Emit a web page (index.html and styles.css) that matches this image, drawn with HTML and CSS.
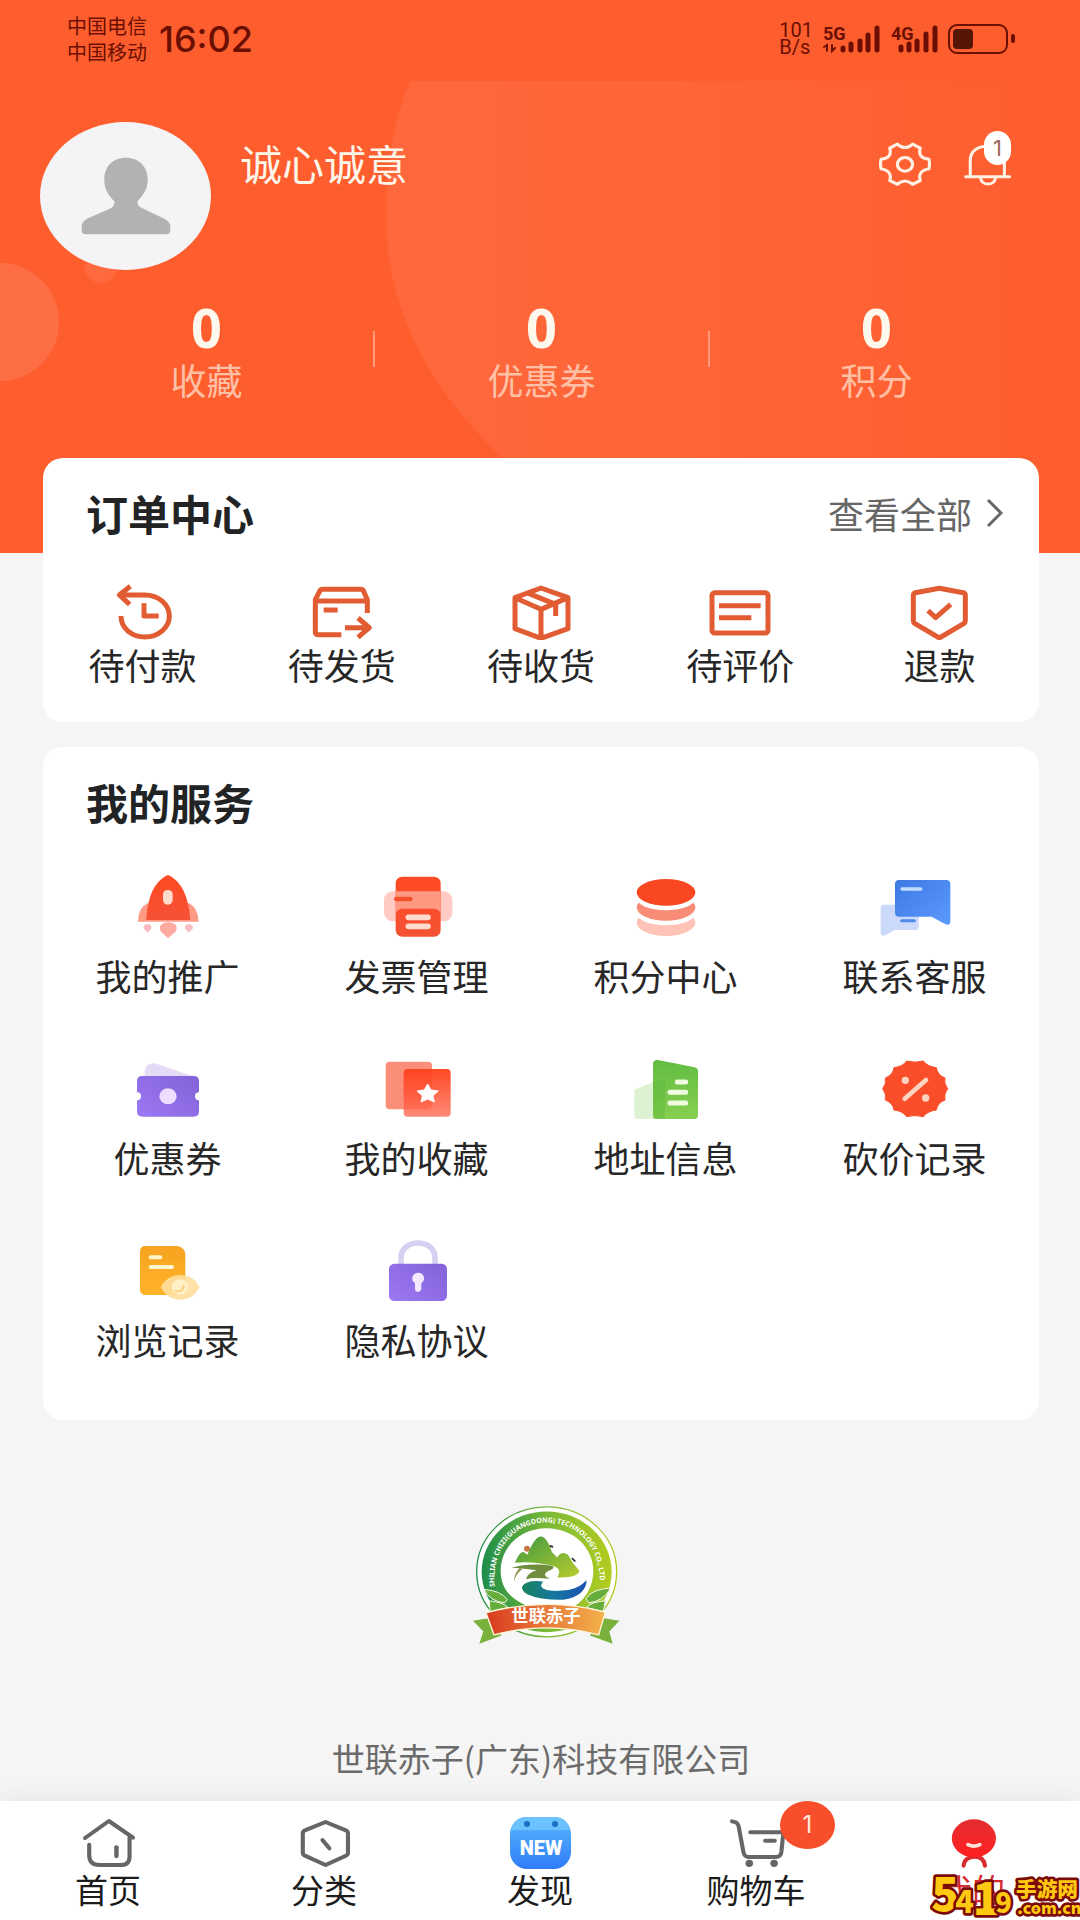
FILE: index.html
```html
<!DOCTYPE html>
<html lang="zh-CN">
<head>
<meta charset="utf-8">
<meta name="viewport" content="width=device-width, initial-scale=1">
<title>我的</title>
<link rel="stylesheet" href="styles.css">
</head>
<body>
<div class="app">
  <header class="hero">
    <svg class="hero-art" width="1080" height="472" viewBox="0 81 1080 472" aria-hidden="true">
      <defs>
        <linearGradient id="glow" x1="0" x2="1" y1="0" y2="0">
          <stop offset="0" stop-color="#fff" stop-opacity=".07"/>
          <stop offset=".4" stop-color="#fff" stop-opacity=".05"/>
          <stop offset="1" stop-color="#fff" stop-opacity="0"/>
        </linearGradient>
      </defs>
      <path d="M410 81Q386 140 386 215Q386 350 505 460L560 553H1080V81Z" fill="url(#glow)"/>
      <circle cx="0" cy="322" r="59" fill="#fff" fill-opacity=".11"/>
      <circle cx="101" cy="267" r="16" fill="#fff" fill-opacity=".08"/>
    </svg>

    <div class="status">
      <div class="carriers"><span>中国电信</span><span>中国移动</span></div>
      <time class="clock">16:02</time>
      <div class="speed"><span>101</span><span>B/s</span></div>
      <svg class="signal" width="58" height="30" viewBox="0 -1 58 30" role="img" aria-label="5G">
        <text class="signal-text" x="0" y="15">5G</text>
        <path d="M4 26V20L1 22M9 20V26L12 23" stroke-width="2"/>
        <path d="M20 23v2M28 19v6M37 16v9M45 10v15M54 3v22" stroke-width="5"/>
      </svg>
      <svg class="signal" width="47" height="30" viewBox="0 -1 47 30" role="img" aria-label="4G">
        <text class="signal-text" x="0" y="15">4G</text>
        <path d="M10 22v3M18 19v6M26 16v9M35 9v16M44 3v22" stroke-width="5"/>
      </svg>
      <svg class="battery" width="67" height="30" viewBox="0 0 67 30" aria-hidden="true">
        <rect x="1" y="1" width="58" height="28" rx="8" fill="none" stroke="#6b0f02" stroke-width="2"/>
        <rect x="5" y="5" width="20" height="20" rx="4" fill="#551605"/>
        <rect x="63" y="10" width="4" height="9" rx="2" fill="#6b0f02"/>
      </svg>
    </div>

    <div class="profile">
      <svg class="avatar" viewBox="113 363 500 448" preserveAspectRatio="none" role="img" aria-label="头像">
        <ellipse cx="363" cy="587" rx="250" ry="224" fill="#f4f4f7"/>
        <path d="M364 471C402 471 428 498 428 537C428 570 412 586 398 603Q398 616 408 622L475 655Q494 665 494 678V692Q494 702 482 703H247Q235 702 235 692V678Q235 665 252 655L320 624Q331 618 331 604C315 586 301 570 301 537C301 498 326 471 364 471Z" fill="#b2b2b2"/>
      </svg>
      <h1 class="name">诚心诚意</h1>
      <div class="actions">
        <button class="icon-btn" type="button" aria-label="设置">
          <svg width="52" height="44" viewBox="985 428 150 128" preserveAspectRatio="none">
            <path d="M1038 434Q1060 454 1082 434L1104 446C1098 466 1108 476 1129 478Q1132 492 1129 506C1108 510 1098 520 1104 540L1082 551Q1060 532 1038 551L1016 540C1022 520 1012 510 991 506Q988 492 991 478C1012 476 1022 466 1016 446Z"/>
            <ellipse cx="1060" cy="493" rx="22" ry="20"/>
          </svg>
        </button>
        <button class="icon-btn" type="button" aria-label="消息">
          <svg width="47" height="44" viewBox="1233 428 135 132" preserveAspectRatio="none">
            <path d="M1238 532H1364M1251 530V483C1251 455 1272 441 1300 441S1349 455 1349 483V530M1281 537C1284 560 1320 560 1323 537"/>
          </svg>
          <span class="bell-count">1</span>
        </button>
      </div>
    </div>

    <div class="stats">
      <a class="stat" href="#fav"><b>0</b><span>收藏</span></a>
      <i class="divider"></i>
      <a class="stat" href="#coupon"><b>0</b><span>优惠券</span></a>
      <i class="divider"></i>
      <a class="stat" href="#points"><b>0</b><span>积分</span></a>
    </div>
  </header>

  <main class="content">
    <section class="card orders">
      <div class="card-head">
        <h2>订单中心</h2>
        <a class="more" href="#orders">查看全部
          <svg width="17" height="30" viewBox="0 0 17 30" aria-hidden="true"><path d="M2 2L15 15L2 28" fill="none" stroke="#666" stroke-width="3"/></svg>
        </a>
      </div>
      <nav class="order-grid">
        <a class="order" href="#pay">
          <svg viewBox="213 72 186 168"><path d="M268 79L235 105L266 133M235 105H312C352 105 385 133 385 168S352 231 312 231S240 205 240 168M309 130V168H353"/></svg>
          <span>待付款</span>
        </a>
        <a class="order" href="#ship">
          <svg viewBox="811 72 186 168"><path d="M902 224H832Q824 224 824 216V119L838 92Q840 88 846 88H960Q966 88 968 92L980 119V159M824 123H980M849 150H891M913 203H984M952 174L986 203L952 232"/></svg>
          <span>待发货</span>
        </a>
        <a class="order" href="#receive">
          <svg viewBox="-90 72 186 168"><path d="M3 84L84 113V206L3 235L-75 206V113ZM-75 113L3 148L84 113M3 148V235M-40 98L47 133V168"/></svg>
          <span>待收货</span>
        </a>
        <a class="order" href="#review">
          <svg viewBox="510 72 186 168"><rect x="519" y="98" width="168" height="121" rx="8"/><path d="M540 137H665M540 173H637"/></svg>
          <span>待评价</span>
        </a>
        <a class="order" href="#refund">
          <svg viewBox="1107 72 186 168"><path d="M1201 85L1273 98Q1279 100 1279 106V182Q1279 188 1274 191L1201 234L1128 191Q1123 188 1123 182V106Q1123 100 1129 98ZM1167 152L1190 173L1235 133"/></svg>
          <span>退款</span>
        </a>
      </nav>
    </section>

    <section class="card services">
      <div class="card-head"><h2>我的服务</h2></div>
      <nav class="service-grid">
        <a class="service" href="#promo">
          <svg viewBox="153 75 216 192">
            <defs>
              <linearGradient id="red" x1="0" x2="0" y1="0" y2="1"><stop offset="0" stop-color="#ff4a24"/><stop offset="1" stop-color="#f45235"/></linearGradient>
              <linearGradient id="violet" x1="0" x2="1" y1="1" y2="0"><stop offset="0" stop-color="#9c78f4"/><stop offset="1" stop-color="#8362d8"/></linearGradient>
              <linearGradient id="blue" x1="0" x2="1" y1="0" y2="1"><stop offset="0" stop-color="#3d79e2"/><stop offset="1" stop-color="#5b9aff"/></linearGradient>
              <linearGradient id="green" x1="0" x2="0" y1="0" y2="1"><stop offset="0" stop-color="#62bd43"/><stop offset="1" stop-color="#88cf50"/></linearGradient>
              <linearGradient id="amber" x1="0" x2="0" y1="0" y2="1"><stop offset="0" stop-color="#f7a321"/><stop offset="1" stop-color="#ffb328"/></linearGradient>
              <linearGradient id="coral" x1="0" x2="0" y1="0" y2="1"><stop offset="0" stop-color="#ff4a24"/><stop offset="1" stop-color="#ff8a78"/></linearGradient>
            </defs>
            <path d="M200 160Q172 172 171 215H353Q350 172 324 160Z" fill="#ff9a84"/>
            <path d="M261 75C226 90 200 130 196 210H328C322 130 296 90 261 75Z" fill="url(#red)"/>
            <rect x="246" y="120" width="29" height="44" rx="14" fill="#ffdccb"/>
            <path d="M261 265L240 245Q232 232 242 222Q261 212 282 222Q292 234 283 246Z" fill="#ffaaa0"/>
            <path d="M200 248L188 236Q185 224 200 222Q214 224 211 236ZM323 248L312 236Q309 224 323 222Q338 224 335 236Z" fill="#f8bcc2"/>
          </svg>
          <span>我的推广</span>
        </a>
        <a class="service" href="#invoice">
          <svg viewBox="900 75 216 192">
            <rect x="909" y="124" width="205" height="90" rx="26" fill="#ffcbc4"/>
            <rect x="944" y="80" width="135" height="180" rx="20" fill="url(#red)"/>
            <path d="M944 124H1079V188Q1070 176 1059 176H964Q952 176 944 188Z" fill="#ff9880"/>
            <path d="M946 147H988" stroke="#f4502b" stroke-width="14" stroke-linecap="round"/>
            <path d="M982 202H1041M982 229H1041" stroke="#ffdccb" stroke-width="17" stroke-linecap="round"/>
          </svg>
          <span>发票管理</span>
        </a>
        <a class="service" href="#credits">
          <svg viewBox="210 75 216 192">
            <ellipse cx="318" cy="218" rx="88" ry="40" fill="#ffc3b7"/>
            <ellipse cx="318" cy="183" rx="93" ry="43" fill="#fff"/>
            <ellipse cx="318" cy="172" rx="88" ry="40" fill="#f98c76"/>
            <ellipse cx="318" cy="138" rx="93" ry="43" fill="#fff"/>
            <ellipse cx="318" cy="127" rx="88" ry="40" fill="#f94722"/>
          </svg>
          <span>积分中心</span>
        </a>
        <a class="service" href="#support">
          <svg viewBox="957 75 216 192">
            <path d="M971 164H1066Q1076 164 1076 174V230Q1076 240 1066 240H1003L973 257Q962 260 962 247V174Q962 164 971 164Z" fill="#cbd9fb"/>
            <path d="M1017 90H1159Q1171 90 1171 102V215Q1169 229 1155 222L1115 200H1017Q1005 200 1005 188V102Q1005 90 1017 90Z" fill="url(#blue)"/>
            <path d="M1026 117H1082" stroke="#c0ddff" stroke-width="10" stroke-linecap="round"/>
            <path d="M1025 212H1063" stroke="#518bea" stroke-width="9" stroke-linecap="round"/>
          </svg>
          <span>联系客服</span>
        </a>
        <a class="service" href="#coupons">
          <svg viewBox="153 621 216 192">
            <path d="M191 690V662Q195 638 222 640L340 680V700Z" fill="#e5daf6"/>
            <path d="M184 678H338Q354 678 354 694V727A12 12 0 0 0 354 751V784Q354 800 338 800H184Q168 800 168 784V751A12 12 0 0 0 168 727V694Q168 678 184 678Z" fill="url(#violet)"/>
            <ellipse cx="261" cy="739" rx="26" ry="24" fill="#efdcff"/>
          </svg>
          <span>优惠券</span>
        </a>
        <a class="service" href="#favorites">
          <svg viewBox="900 621 216 192">
            <rect x="914" y="635" width="139" height="143" rx="12" fill="#fb8e78"/>
            <rect x="968" y="657" width="141" height="143" rx="12" fill="url(#coral)"/>
            <path d="M968 669Q968 657 980 657H1053V766Q1053 778 1041 778H968Z" fill="#ff3514" fill-opacity=".25"/>
            <path d="M1040 702L1050 720L1072 723L1056 737L1060 756L1040 747L1020 756L1024 737L1008 723L1030 720Z" fill="#fff" stroke="#fff" stroke-width="3" stroke-linejoin="round"/>
          </svg>
          <span>我的收藏</span>
        </a>
        <a class="service" href="#address">
          <svg viewBox="210 621 216 192">
            <path d="M223 719L279 696H315V807H233Q223 807 223 797Z" fill="#ddf2d3"/>
            <path d="M294 630L404 652Q414 655 414 664V796Q414 807 403 807H290Q279 807 279 796V640Q281 628 294 630Z" fill="url(#green)"/>
            <path d="M279 696L315 690V807H290Q279 807 279 796Z" fill="#58b63d" fill-opacity=".4"/>
            <path d="M352 696H377M330 727H377M330 759H377" stroke="#effce0" stroke-width="15" stroke-linecap="round"/>
          </svg>
          <span>地址信息</span>
        </a>
        <a class="service" href="#bargain">
          <svg viewBox="957 621 216 192">
            <path d="M1040 633Q1065 640 1090 633Q1103 650 1129 653Q1132 675 1155 684Q1151 701 1163 716Q1151 731 1155 750Q1132 759 1129 780Q1103 783 1090 800Q1065 793 1040 800Q1028 783 1002 780Q999 759 976 750Q980 731 968 716Q980 701 976 684Q999 675 1002 653Q1028 650 1040 633Z" fill="#fa4e2a" stroke="#fa4e2a" stroke-width="3" stroke-linejoin="round"/>
            <path d="M1034 746L1098 690" stroke="#ffd3c2" stroke-width="14" stroke-linecap="round"/>
            <circle cx="1036" cy="691" r="11" fill="#ffd3c2"/><circle cx="1097" cy="744" r="11" fill="#ffd3c2"/>
          </svg>
          <span>砍价记录</span>
        </a>
        <a class="service" href="#history">
          <svg viewBox="153 297 216 192">
            <path d="M194 318H288Q313 322 313 345V447Q313 465 295 465H194Q177 465 177 447V335Q177 318 194 318Z" fill="url(#amber)"/>
            <path d="M209 352H238M209 381H273" stroke="#fff6ce" stroke-width="12" stroke-linecap="round"/>
            <path d="M239 441Q258 405 298 405T356 441Q337 479 298 479T239 441Z" fill="#ffdf9f" fill-opacity=".9"/>
            <ellipse cx="297" cy="441" rx="25" ry="23" fill="#fff0c8"/>
            <path d="M284 452Q304 459 308 438" fill="none" stroke="#fbd48a" stroke-width="7" stroke-linecap="round"/>
          </svg>
          <span>浏览记录</span>
        </a>
        <a class="service" href="#privacy">
          <svg viewBox="900 297 216 192">
            <path d="M960 376V354C960 326 983 309 1011 309S1062 326 1062 354V376" fill="none" stroke="#d8d0f3" stroke-width="17"/>
            <rect x="924" y="371" width="174" height="112" rx="16" fill="url(#violet)"/>
            <path d="M1011 398A19 17 0 0 1 1021 429V448Q1019 456 1011 456T1002 448V429A19 17 0 0 1 1011 398Z" fill="#f3e8ff"/>
          </svg>
          <span>隐私协议</span>
        </a>
      </nav>
    </section>
  </main>

  <footer class="company">
    <svg class="logo" viewBox="60 70 486 425" role="img" aria-label="世联赤子">
      <defs>
        <linearGradient id="ring" x1="0" x2="1" y1="0" y2="0"><stop offset="0" stop-color="#1d8d4b"/><stop offset=".5" stop-color="#7bb936"/><stop offset="1" stop-color="#b3cc20"/></linearGradient>
        <linearGradient id="ribbon" x1="0" x2="1" y1="0" y2="0"><stop offset="0" stop-color="#d83a1d"/><stop offset=".5" stop-color="#e8793a"/><stop offset="1" stop-color="#f2b24a"/></linearGradient>
        <linearGradient id="hill" x1="0" x2="1" y1="0" y2="1"><stop offset="0" stop-color="#3f9a42"/><stop offset="1" stop-color="#b8cb2d"/></linearGradient>
        <linearGradient id="river" x1="0" x2="1" y1="0" y2="0"><stop offset="0" stop-color="#18835c"/><stop offset=".5" stop-color="#1677a1"/><stop offset="1" stop-color="#1b50b0"/></linearGradient>
        <path id="arc" d="M164 318C154 200 225 125 320 125S485 200 480 318"/>
      </defs>
      <ellipse cx="320" cy="273" rx="210" ry="195" fill="#fff" stroke="url(#ring)" stroke-width="4"/>
      <ellipse cx="320" cy="273" rx="195" ry="181" fill="url(#ring)"/>
      <path d="M320 142C240 142 182 200 182 270S235 375 320 390S460 340 460 270S400 142 320 142Z" fill="#fff"/>
      <text class="logo-ring"><textPath href="#arc">SHILIAN CHIZI(GUANGDONG) TECHNOLOGY CO., LTD</textPath></text>
      <path d="M225 246Q240 208 252 214L262 222Q284 168 302 167Q320 166 336 214L352 230Q364 208 384 222Q396 246 418 270Q414 292 352 290Q370 260 330 253Q270 240 225 246Z" fill="url(#hill)"/>
      <path d="M215 261Q270 245 336 255Q348 262 330 268Q300 280 330 294Q280 288 258 295Q262 276 290 268Q240 262 215 261Z" fill="#6e8e3d"/>
      <path d="M238 262Q222 278 222 304Q226 280 248 264Z" fill="#8b8c45"/>
      <path d="M246 318Q258 296 310 302C290 322 320 332 358 330Q410 330 440 298Q438 345 370 357Q300 358 262 340Q246 334 246 318Z" fill="url(#river)"/>
      <circle cx="261" cy="204" r="9" fill="#c57745"/>
      <path d="M329 195l10 3M396 232l10 10" stroke="#222" stroke-width="5"/>
      <path d="M132 326Q180 328 202 356L194 366Q150 362 132 326ZM512 322Q456 324 438 354L446 366Q490 362 512 322ZM148 360Q190 364 204 380L150 392ZM496 360Q450 364 440 380L490 392Z" fill="#67ad3c" stroke="#f4f8e8" stroke-width="3"/>
      <path d="M99 420L160 410L184 464L118 489L130 452ZM538 420L478 410L450 464L518 489L508 452Z" fill="#79b13c"/>
      <path d="M138 396Q320 346 496 394L476 462Q320 420 162 462Z" fill="url(#ribbon)" stroke="#fff4d8" stroke-width="4"/>
      <text class="logo-name" x="318" y="424">世联赤子</text>
    </svg>
    <p>世联赤子(广东)科技有限公司</p>
  </footer>

  <nav class="tabbar">
    <a class="tab" href="#home">
      <svg viewBox="212 114 203 162" preserveAspectRatio="none" class="line"><path d="M247 180L316 129L386 179M259 200V232Q259 261 288 261H350Q376 261 376 236V178"/><path d="M338 208V234" stroke-width="13"/></svg>
      <span>首页</span>
    </a>
    <a class="tab" href="#category">
      <svg viewBox="839 114 203 162" preserveAspectRatio="none" class="line"><path d="M945 132L1004 157Q1010 160 1010 166V225Q1010 230 1004 233L945 261L885 233Q879 230 879 225V166Q879 160 885 157ZM936 186L956 211"/></svg>
      <span>分类</span>
    </a>
    <a class="tab" href="#discover">
      <svg viewBox="0 0 70 54">
        <defs><linearGradient id="new" x1="0" x2="0" y1="0" y2="1"><stop offset="0" stop-color="#58b8fc"/><stop offset="1" stop-color="#2f7cf9"/></linearGradient></defs>
        <rect x="5" y="1" width="61" height="52" rx="17" fill="url(#new)"/>
        <path d="M6 14Q9 1 22 1H49Q62 1 65 14Z" fill="#6cc1ff"/>
        <circle cx="22" cy="8" r="3" fill="#1971c4"/><circle cx="50" cy="8" r="3" fill="#1971c4"/>
        <text class="new-text" x="36" y="39">NEW</text>
      </svg>
      <span>发现</span>
    </a>
    <a class="tab" href="#cart">
      <svg viewBox="528 114 203 162" preserveAspectRatio="none" class="line"><path d="M560 130L571 133Q577 136 579 144L593 222Q596 237 608 237H688Q701 237 703 222L709 163H613M656 188H684"/><circle cx="610" cy="256" r="11"/><circle cx="682" cy="256" r="11"/></svg>
      <span>购物车</span>
      <span class="cart-count">1</span>
    </a>
    <a class="tab active" href="#me">
      <svg viewBox="1155 114 203 162" preserveAspectRatio="none">
        <defs><linearGradient id="me" x1="0" x2="0" y1="0" y2="1"><stop offset="0" stop-color="#e32d31"/><stop offset="1" stop-color="#ff2020"/></linearGradient></defs>
        <path d="M1232 263Q1234 238 1262 236T1294 263" fill="none" stroke="#d62b30" stroke-width="12" stroke-linecap="round"/>
        <ellipse cx="1262" cy="181" rx="64" ry="57" fill="url(#me)"/>
        <path d="M1245 200Q1262 209 1279 200" fill="none" stroke="#ffe1da" stroke-width="11" stroke-linecap="round"/>
      </svg>
      <span>我的</span>
    </a>
  </nav>

  <svg class="watermark" width="150" height="54" viewBox="30 140 450 162" role="img" aria-label="5419手游网 .com.cn">
    <g class="wm">
      <text x="34" y="276" font-size="136">5</text>
      <text x="106" y="282" font-size="92">4</text>
      <text x="158" y="286" font-size="134">1</text>
      <text x="226" y="282" font-size="82">9</text>
      <text x="288" y="234" font-size="62">手游网</text>
      <text x="292" y="284" font-size="48">.com.cn</text>
    </g>
  </svg>
</div>
</body>
</html>
```
FILE: styles.css
```css
* {
  box-sizing: border-box;
}

body {
  margin: 0;
  background: #f5f5f5;
  color: #272727;
  font-family: "Noto Sans CJK SC", "Noto Sans", sans-serif;
}

a {
  color: inherit;
  text-decoration: none;
}

h1,
h2,
p {
  margin: 0;
}

svg {
  display: block;
  flex: none;
}

.app {
  position: relative;
  display: flex;
  flex-direction: column;
  min-height: 100vh;
}

/* Header */
.hero {
  position: relative;
  padding: 13px 37px 152px 40px;
  background: #fe5d2e;
  overflow: hidden;
}

.hero-art {
  position: absolute;
  left: 0;
  bottom: 0;
}

.status,
.profile,
.stats {
  position: relative;
}

.status {
  display: flex;
  align-items: center;
  gap: 10px;
  padding: 0 28px 0 27px;
  color: #6b0f02;
}

.carriers,
.speed {
  display: flex;
  flex-direction: column;
}

.carriers {
  font-size: 20px;
  line-height: 26px;
}

.clock {
  margin: 0 auto 0 2px;
  font: 500 36px/52px Inter, sans-serif;
}

.speed {
  font: 20px/17px Roboto, sans-serif;
}

.signal {
  overflow: visible;
}

.signal path {
  fill: none;
  stroke: #6b0f02;
  stroke-linecap: round;
}

.signal-text {
  font: 700 18px Roboto, sans-serif;
  fill: #6b0f02;
}

.profile {
  display: flex;
  align-items: flex-start;
  margin-top: 57px;
}

.avatar {
  width: 171px;
  height: 148px;
}

.name {
  margin: 16px 0 0 29px;
  color: #fff6ea;
  font-size: 42px;
  font-weight: 400;
  line-height: 50px;
}

.actions {
  display: flex;
  gap: 33px;
  margin: 20px 32px 0 auto;
}

.icon-btn {
  position: relative;
  padding: 0;
  border: 0;
  background: none;
}

.icon-btn svg {
  fill: none;
  stroke: #fff1e4;
  stroke-width: 9;
  stroke-linecap: round;
  stroke-linejoin: round;
}

.bell-count {
  position: absolute;
  top: -11px;
  right: 0;
  width: 27px;
  border-radius: 14px;
  background: #fff;
  color: #9a6a58;
  font: 22px/34px Inter, sans-serif;
  text-align: center;
}

.stats {
  display: grid;
  grid-template-columns: 1fr 2px 1fr 2px 1fr;
  align-items: center;
  margin-top: 27px;
}

.stat {
  display: flex;
  flex-direction: column;
  align-items: center;
  color: #ffc0a6;
  font-size: 36px;
  line-height: 44px;
}

.stat b {
  color: #fff8ec;
  font: 700 54px/60px "Open Sans", sans-serif;
}

.divider {
  height: 36px;
  background: #ff9a78;
}

/* Cards */
.content {
  position: relative;
  display: flex;
  flex-direction: column;
  gap: 25px;
  margin-top: -95px;
  padding: 0 41px 0 43px;
}

.card {
  border-radius: 20px;
  background: #fff;
}

.orders {
  padding: 29px 0 36px;
}

.services {
  padding: 29px 0 59px;
}

.card-head {
  display: flex;
  align-items: center;
  justify-content: space-between;
  padding: 0 36px 0 43px;
  line-height: 52px;
}

.card-head h2 {
  color: #212325;
  font-size: 42px;
  font-weight: 700;
}

.more {
  display: flex;
  align-items: center;
  gap: 14px;
  color: #666;
  font-size: 36px;
}

.order-grid {
  display: grid;
  grid-template-columns: repeat(5, 1fr);
  margin-top: 45px;
}

.order,
.service {
  display: flex;
  flex-direction: column;
  align-items: center;
  font-size: 36px;
  line-height: 44px;
}

.order {
  gap: 2px;
}

.order svg {
  width: 62px;
  height: 56px;
  fill: none;
  stroke: #e15c33;
  stroke-width: 15;
  stroke-linejoin: round;
}

.service-grid {
  display: grid;
  grid-template-columns: repeat(4, 1fr);
  row-gap: 60px;
  margin-top: 47px;
}

.service {
  gap: 14px;
}

.service svg {
  width: 72px;
  height: 64px;
}

/* Company */
.company {
  display: flex;
  flex-direction: column;
  align-items: center;
  gap: 90px;
  margin-top: auto;
  padding: 84px 0 21px 2px;
  color: #6b6b6b;
  font-size: 33px;
  line-height: 44px;
}

.logo {
  width: 162px;
  height: 142px;
}

.logo-ring {
  fill: #fff;
  font: 700 21px "Noto Sans", sans-serif;
}

.logo-name {
  fill: #fff;
  font-size: 52px;
  font-weight: 700;
  text-anchor: middle;
}

/* Tab bar */
.tabbar {
  display: grid;
  grid-template-columns: repeat(5, 1fr);
  padding: 15px 0 12px;
  background: #fff;
  box-shadow: 0 -6px 20px rgba(0, 0, 0, 0.05);
}

.tab {
  position: relative;
  display: flex;
  flex-direction: column;
  align-items: center;
  color: #1c1c1c;
  font-size: 33px;
  line-height: 38px;
}

.tab svg {
  width: 70px;
  height: 54px;
}

.tab .line {
  fill: none;
  stroke: #666;
  stroke-width: 12;
  stroke-linecap: round;
  stroke-linejoin: round;
}

.tab .line circle {
  fill: #666;
  stroke: none;
}

.active {
  color: #d62b30;
}

.new-text {
  fill: #fff;
  font: 900 20px Roboto, sans-serif;
  text-anchor: middle;
}

.cart-count {
  position: absolute;
  top: -15px;
  left: calc(50% + 24px);
  width: 55px;
  border-radius: 50%;
  background: #f94e2b;
  color: #ffe9dc;
  font: 24px/48px Inter, sans-serif;
  text-align: center;
}

.watermark {
  position: absolute;
  right: 0;
  bottom: 0;
}

.wm {
  fill: #ffc912;
  stroke: #7c0a08;
  stroke-width: 16;
  stroke-linejoin: round;
  paint-order: stroke;
  font-family: "Noto Sans CJK SC", sans-serif;
  font-weight: 900;
}
```
